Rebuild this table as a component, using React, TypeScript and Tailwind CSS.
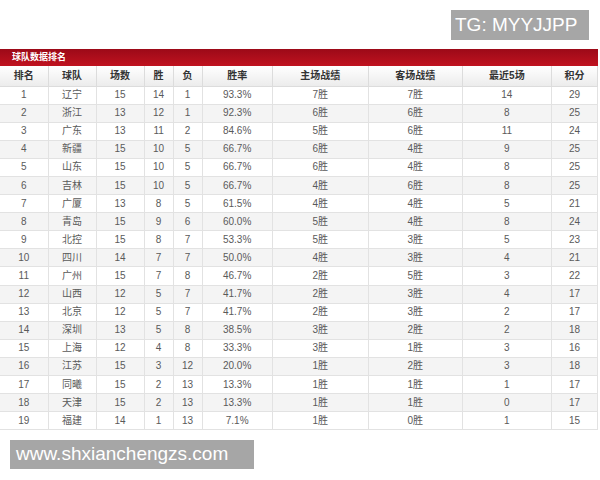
type Row = [number, string, number, number, number, string, string, string, number, number];

const rows: Row[] = [
  [1, '辽宁', 15, 14, 1, '93.3%', '7胜', '7胜', 14, 29],
  [2, '浙江', 13, 12, 1, '92.3%', '6胜', '6胜', 8, 25],
  [3, '广东', 13, 11, 2, '84.6%', '5胜', '6胜', 11, 24],
  [4, '新疆', 15, 10, 5, '66.7%', '6胜', '4胜', 9, 25],
  [5, '山东', 15, 10, 5, '66.7%', '6胜', '4胜', 8, 25],
  [6, '吉林', 15, 10, 5, '66.7%', '4胜', '6胜', 8, 25],
  [7, '广厦', 13, 8, 5, '61.5%', '4胜', '4胜', 5, 21],
  [8, '青岛', 15, 9, 6, '60.0%', '5胜', '4胜', 8, 24],
  [9, '北控', 15, 8, 7, '53.3%', '5胜', '3胜', 5, 23],
  [10, '四川', 14, 7, 7, '50.0%', '4胜', '3胜', 4, 21],
  [11, '广州', 15, 7, 8, '46.7%', '2胜', '5胜', 3, 22],
  [12, '山西', 12, 5, 7, '41.7%', '2胜', '3胜', 4, 17],
  [13, '北京', 12, 5, 7, '41.7%', '2胜', '3胜', 2, 17],
  [14, '深圳', 13, 5, 8, '38.5%', '3胜', '2胜', 2, 18],
  [15, '上海', 12, 4, 8, '33.3%', '3胜', '1胜', 3, 16],
  [16, '江苏', 15, 3, 12, '20.0%', '1胜', '2胜', 3, 18],
  [17, '同曦', 15, 2, 13, '13.3%', '1胜', '1胜', 1, 17],
  [18, '天津', 15, 2, 13, '13.3%', '1胜', '1胜', 0, 17],
  [19, '福建', 14, 1, 13, '7.1%', '1胜', '0胜', 1, 15]
];

const headers = ['排名', '球队', '场数', '胜', '负', '胜率', '主场战绩', '客场战绩', '最近5场', '积分'];

// column widths read off the screenshot
const cols = [48, 48, 48, 29, 29, 70, 96, 94, 89, 46];

export default function App() {
  return (
    <div className="relative h-[480px] w-[600px] overflow-hidden bg-white font-['Liberation_Sans','Noto_Sans_CJK_SC',sans-serif]">
      <div className="pt-[49px] pr-[2px]">
        <div className="flex h-[17px] items-center bg-gradient-to-b from-[#9c0a18] to-[#c0121f] pl-[12px] text-[9px] font-bold text-white">
          球队数据排名
        </div>
        <table className="w-[598px] table-fixed border-collapse text-[10px]">
          <colgroup>
            {cols.map((w, i) => (
              <col key={i} style={{ width: w }} />
            ))}
          </colgroup>
          <thead>
            <tr className="h-[20px] bg-gradient-to-b from-white to-[#ececec]">
              {headers.map((h) => (
                <th
                  key={h}
                  className="border-r border-b border-[#dcdcdc] p-0 text-center font-bold text-[#333]"
                >
                  {h}
                </th>
              ))}
            </tr>
          </thead>
          <tbody>
            {rows.map((r) => (
              <tr key={r[0]} className={r[0] % 2 === 0 ? 'h-[18.1px] bg-[#f4f4f4]' : 'h-[18.1px] bg-white'}>
                {r.map((c, i) => (
                  <td
                    key={i}
                    className="border-r border-b border-[#e2e2e2] p-0 text-center leading-none text-[#5a5a5a]"
                  >
                    {c}
                  </td>
                ))}
              </tr>
            ))}
          </tbody>
        </table>
      </div>

      <div className="absolute top-[10px] left-[451px] flex h-[30px] w-[138px] items-center bg-[#a6a6a6] pl-[4px] text-[19px] text-white">
        TG: MYYJJPP
      </div>
      <div className="absolute top-[440px] left-[10px] flex h-[29px] w-[244px] items-center bg-[#a6a6a6] pl-[6px] text-[19px] text-white">
        www.shxianchengzs.com
      </div>
    </div>
  );
}
